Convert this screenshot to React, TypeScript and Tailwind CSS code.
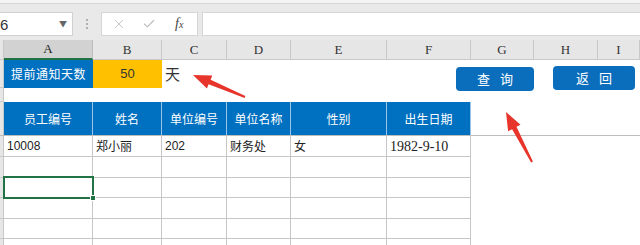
import React from 'react';
import { X, Check } from 'lucide-react';

const COLS = [4, 89, 69, 65, 64, 96, 84, 63, 64, 42];
const LETTERS = ['A', 'B', 'C', 'D', 'E', 'F', 'G', 'H', 'I'];
const HEADERS = ['员工编号', '姓名', '单位编号', '单位名称', '性别', '出生日期'];
const DATA = ['10008', '郑小丽', '202', '财务处', '女', '1982-9-10'];
const ROW_HEIGHTS = [20, 21, 20, 21, 20, 21];

const cjk = { fontFamily: '"Noto Sans CJK SC", "Noto Sans", sans-serif' };

const RowStrip: React.FC<{ h: number }> = ({ h }) => (
    <div className="shrink-0 bg-[#e6e6e6] border-r border-b border-[#c8c8c8]" style={{ width: COLS[0], height: h }} />
);

const App: React.FC = () => {
    return (
        <div className="relative w-[640px] h-[245px] overflow-hidden bg-white text-[#222]" style={cjk}>
            {/* ribbon edge */}
            <div className="h-[4px] bg-[#f3f3f3] border-b border-[#d4d4d4]" />

            {/* formula bar */}
            <div className="h-[36px] bg-[#e9e9e9] flex items-start pt-[8px]">
                <div className="w-[73px] h-[24px] bg-white border border-[#d0d0d0] border-l-0 flex items-center justify-between pr-[5px] overflow-hidden">
                    <span className="text-[15px] leading-none text-[#333]" style={{ fontFamily: '"Liberation Sans", sans-serif' }}>6</span>
                    <span className="text-[8px] text-[#666]">▼</span>
                </div>
                <div className="w-[28px] h-[24px] flex flex-col items-center justify-center gap-[2px]">
                    <span className="w-[2px] h-[2px] bg-[#b0b0b0]" />
                    <span className="w-[2px] h-[2px] bg-[#b0b0b0]" />
                    <span className="w-[2px] h-[2px] bg-[#b0b0b0]" />
                </div>
                <div className="w-[97px] h-[24px] bg-white border border-[#d6d6d6] flex items-center">
                    <X size={14} className="ml-[10px] text-[#bdbdbd]" strokeWidth={1.5} />
                    <Check size={14} className="ml-[16px] text-[#bdbdbd]" strokeWidth={2} />
                    <span className="ml-[19px] italic text-[14px] text-[#444] leading-none" style={{ fontFamily: '"Liberation Serif", serif' }}>
                        f<span className="text-[10px]">x</span>
                    </span>
                </div>
                <div className="ml-[4px] flex-1 h-[24px] bg-white border border-[#d6d6d6] border-r-0" />
            </div>

            {/* column headers */}
            <div className="flex h-[20px]" style={{ fontFamily: '"Liberation Serif", serif' }}>
                <div className="shrink-0 bg-[#e6e6e6] border-r border-b border-[#c8c8c8]" style={{ width: COLS[0] }} />
                {LETTERS.map((l, i) => (
                    <div
                        key={l}
                        className={
                            i === 0
                                ? 'shrink-0 flex items-center justify-center bg-[#d2d2d2] border-r border-[#bcbcbc] border-b-2 border-b-[#217346] text-[13px] text-[#222]'
                                : 'shrink-0 flex items-center justify-center bg-[#e6e6e6] border-r border-b border-[#c8c8c8] text-[13px] text-[#333]'
                        }
                        style={{ width: COLS[i + 1] }}
                    >
                        {l}
                    </div>
                ))}
            </div>

            {/* row 1 */}
            <div className="flex h-[28px]">
                <RowStrip h={28} />
                <div className="shrink-0 bg-[#0070c0] text-white text-[12px] whitespace-nowrap flex items-center justify-center tracking-[0.5px]" style={{ width: COLS[1] }}>
                    提前通知天数
                </div>
                <div className="shrink-0 bg-[#ffc000] text-[#333] text-[13px] flex items-center justify-center" style={{ width: COLS[2], fontFamily: '"Liberation Sans", sans-serif' }}>
                    50
                </div>
                <div className="shrink-0 flex items-center pl-[3px] text-[15px] text-[#333]" style={{ width: COLS[3] }}>
                    天
                </div>
            </div>

            {/* row 2 */}
            <div className="flex h-[14px]">
                <RowStrip h={14} />
            </div>

            {/* row 3: table header */}
            <div className="flex h-[34px] border-b border-[#bdbdbd]">
                <div className="shrink-0 bg-[#e6e6e6] border-r border-[#c8c8c8]" style={{ width: COLS[0] }} />
                {HEADERS.map((h, i) => (
                    <div
                        key={h}
                        className="shrink-0 bg-[#0070c0] text-white text-[12px] whitespace-nowrap flex items-center justify-center border-r border-[#9dc3e6]"
                        style={{ width: COLS[i + 1] }}
                    >
                        {h}
                    </div>
                ))}
            </div>

            {/* data row */}
            <div className="flex h-[21px]">
                <RowStrip h={21} />
                {DATA.map((d, i) => (
                    <div
                        key={i}
                        className={
                            i === 5
                                ? 'shrink-0 flex items-center pl-[3px] text-[14px] text-[#222] border-r border-b border-[#c6c6c6]'
                                : 'shrink-0 flex items-center pl-[3px] text-[12px] text-[#222] border-r border-b border-[#c6c6c6]'
                        }
                        style={{
                            width: COLS[i + 1],
                            fontFamily:
                                i === 5
                                    ? '"Liberation Serif", serif'
                                    : i === 0 || i === 2
                                      ? '"Liberation Sans", sans-serif'
                                      : '"Noto Sans CJK SC", sans-serif',
                        }}
                    >
                        {d}
                    </div>
                ))}
            </div>

            {/* empty rows */}
            {ROW_HEIGHTS.slice(1).map((h, r) => (
                <div key={r} className="flex" style={{ height: h }}>
                    <RowStrip h={h} />
                    {HEADERS.map((_, i) => (
                        <div
                            key={i}
                            className="shrink-0 border-r border-b border-[#c6c6c6]"
                            style={{ width: COLS[i + 1] }}
                        />
                    ))}
                </div>
            ))}

            {/* selected cell A6 */}
            <div className="absolute left-[3px] top-[176px] w-[91px] h-[23px] border-2 border-[#217346] pointer-events-none">
                <div className="absolute -right-[4px] -bottom-[4px] w-[6px] h-[6px] bg-[#217346] border border-white" />
            </div>

            {/* shape buttons */}
            <button className="absolute left-[456px] top-[67px] w-[78px] h-[24px] rounded-[4px] bg-[#0a6ebd] text-white text-[13px] tracking-[10px] pl-[10px] flex items-center justify-center">
                查询
            </button>
            <button className="absolute left-[553px] top-[66px] w-[82px] h-[24px] rounded-[4px] bg-[#0a6ebd] text-white text-[13px] tracking-[10px] pl-[10px] flex items-center justify-center">
                返回
            </button>

            {/* red arrows */}
            <svg className="absolute inset-0 pointer-events-none" width="640" height="245" viewBox="0 0 640 245">
                <polygon
                    fill="#e8352c"
                    points="193,75 212.3,75.6 210.6,79.7 245.4,96.1 244.6,97.9 208.6,84.3 206.9,88.4"
                />
                <polygon
                    fill="#e8352c"
                    points="506,112 520.5,124.8 516.5,126.8 532.9,161.5 531.1,162.5 512.1,129.2 508.1,131.2"
                />
            </svg>
        </div>
    );
};

export default App;
